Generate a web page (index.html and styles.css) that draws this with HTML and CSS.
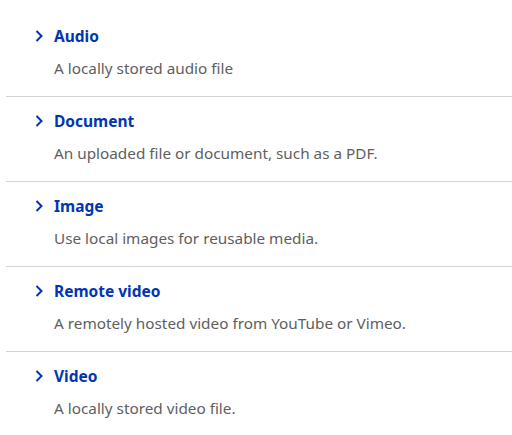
FILE: index.html
```html
<!DOCTYPE html>
<html lang="en">
<head>
  <meta charset="UTF-8" />
  <meta name="viewport" content="width=device-width, initial-scale=1.0"/>
  <title>Media types</title>
  <link rel="stylesheet" href="styles.css">
</head>
<body>
  <ul class="media-list">
    <li class="media-item">
      <a class="media-title" href="#">
        <svg class="chevron" viewBox="0 0 10 14" width="10" height="14"><path d="M2.5 2 L7.5 7 L2.5 12" /></svg>
        Audio
      </a>
      <p class="media-desc">A locally stored audio file</p>
    </li>
    <li class="media-item">
      <a class="media-title" href="#">
        <svg class="chevron" viewBox="0 0 10 14" width="10" height="14"><path d="M2.5 2 L7.5 7 L2.5 12" /></svg>
        Document
      </a>
      <p class="media-desc">An uploaded file or document, such as a PDF.</p>
    </li>
    <li class="media-item">
      <a class="media-title" href="#">
        <svg class="chevron" viewBox="0 0 10 14" width="10" height="14"><path d="M2.5 2 L7.5 7 L2.5 12" /></svg>
        Image
      </a>
      <p class="media-desc">Use local images for reusable media.</p>
    </li>
    <li class="media-item">
      <a class="media-title" href="#">
        <svg class="chevron" viewBox="0 0 10 14" width="10" height="14"><path d="M2.5 2 L7.5 7 L2.5 12" /></svg>
        Remote video
      </a>
      <p class="media-desc">A remotely hosted video from YouTube or Vimeo.</p>
    </li>
    <li class="media-item">
      <a class="media-title" href="#">
        <svg class="chevron" viewBox="0 0 10 14" width="10" height="14"><path d="M2.5 2 L7.5 7 L2.5 12" /></svg>
        Video
      </a>
      <p class="media-desc">A locally stored video file.</p>
    </li>
  </ul>
</body>
</html>
```

FILE: styles.css
```css
* {
  margin: 0;
  padding: 0;
  box-sizing: border-box;
}

body {
  font-family: 'Noto Sans', 'Open Sans', sans-serif;
  background: #fff;
  color: #555;
  padding: 12px 0 0 6px;
}

.media-list {
  list-style: none;
}

.media-item {
  height: 85px;
  padding: 13px 0 0 28px;
  border-bottom: 1px solid #d3d3d3;
}

.media-item:last-child {
  border-bottom: none;
}

.media-title {
  display: flex;
  align-items: center;
  gap: 10px;
  height: 22px;
  font-size: 15.5px;
  font-weight: 700;
  color: #0036b1;
  text-decoration: none;
}

.chevron {
  fill: none;
  stroke: #0036b1;
  stroke-width: 2;
}

.media-desc {
  margin: 10px 0 0 20px;
  font-size: 15.3px;
  line-height: 22px;
  color: #5e5e5e;
}
```
